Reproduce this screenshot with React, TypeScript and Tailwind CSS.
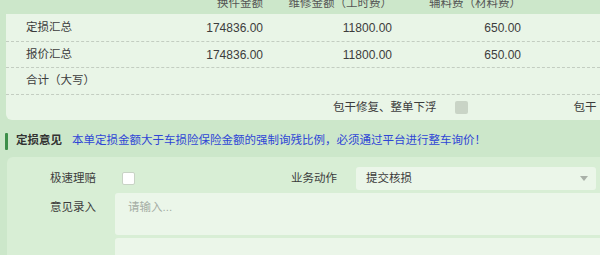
const rows = [
  { label: "定损汇总", parts: "174836.00", labor: "11800.00", material: "650.00" },
  { label: "报价汇总", parts: "174836.00", labor: "11800.00", material: "650.00" },
];

export default function App() {
  return (
    <div
      className="w-[600px] h-[255px] overflow-hidden bg-[#cce7ca] text-[#3c3c3c] text-[11.5px]"
      style={{ fontFamily: '"Liberation Sans", "Noto Sans CJK SC", sans-serif' }}
    >
      {/* column headers, cut by the scroll */}
      <div className="ml-[6px] h-[14px] overflow-hidden flex pl-[20px] text-[#555]">
        <div className="w-[117px]" />
        <div className="w-[120px] text-right leading-[12px] -mt-[3px]">换件金额</div>
        <div className="w-[129px] text-right leading-[12px] -mt-[3px]">维修金额（工时费）</div>
        <div className="w-[129px] text-right leading-[12px] -mt-[3px]">辅料费（材料费）</div>
      </div>

      {/* totals table */}
      <div className="ml-[6px] h-[106px] bg-[#e9f5e7] rounded-bl-[6px] flex flex-col">
        {rows.map((r, i) => (
          <div
            key={r.label}
            className={`flex items-center pl-[20px] border-b border-dashed border-[#c3cdc1] ${
              i === 0 ? "h-[28px]" : "h-[26px]"
            }`}
          >
            <div className="w-[117px]">{r.label}</div>
            <div className="w-[120px] text-right text-[12px]">{r.parts}</div>
            <div className="w-[129px] text-right text-[12px]">{r.labor}</div>
            <div className="w-[129px] text-right text-[12px]">{r.material}</div>
          </div>
        ))}
        <div className="flex items-center h-[27px] pl-[20px] border-b border-dashed border-[#c3cdc1]">
          合计（大写）
        </div>
        <div className="flex items-center h-[25px] pl-[327px] overflow-hidden whitespace-nowrap">
          <span className="shrink-0">包干修复、整单下浮</span>
          <span className="shrink-0 ml-[18px] w-[13px] h-[13px] rounded-[2px] bg-[#c9d4c6]" />
          <span className="shrink-0 ml-[106px]">包干</span>
        </div>
      </div>

      {/* section header */}
      <div className="h-[37px] flex items-center pt-[5px]">
        <div className="ml-[5px] w-[3px] h-[17px] bg-[#3d8f4a] rounded-[1px]" />
        <span className="ml-[8px] font-bold text-[#333]">定损意见</span>
        <span className="ml-[10px] text-[#2f46d6] whitespace-nowrap">
          本单定损金额大于车损险保险金额的强制询残比例，必须通过平台进行整车询价！
        </span>
      </div>

      {/* form */}
      <div className="ml-[7px] h-[98px] bg-[#d8eed5] rounded-tl-[6px] pt-[10px] flex flex-col gap-[3px]">
        <div className="flex items-center h-[23px]">
          <span className="ml-[43px] w-[72px]">极速理赔</span>
          <span className="w-[13px] h-[13px] bg-white border border-[#c8d3c5] rounded-[2px]" />
          <span className="ml-[156px] w-[65px]">业务动作</span>
          <div className="w-[240px] h-[23px] rounded-[3px] bg-[#ebf6e9] flex items-center justify-between pl-[10px] pr-[8px]">
            <span>提交核损</span>
            <span className="w-0 h-0 border-l-[4px] border-r-[4px] border-t-[5px] border-l-transparent border-r-transparent border-t-[#a9b1a8]" />
          </div>
        </div>
        <div className="flex">
          <span className="ml-[43px] w-[65px] pt-[6px]">意见录入</span>
          <div className="flex-1 h-[42px] bg-[#ebf6e9] rounded-l-[3px] pl-[13px] pt-[6px] text-[#a5ada4]">
            请输入...
          </div>
        </div>
        <div className="flex">
          <span className="ml-[108px] flex-1 h-[20px] bg-[#ebf6e9] rounded-l-[3px]" />
        </div>
      </div>
    </div>
  );
}
